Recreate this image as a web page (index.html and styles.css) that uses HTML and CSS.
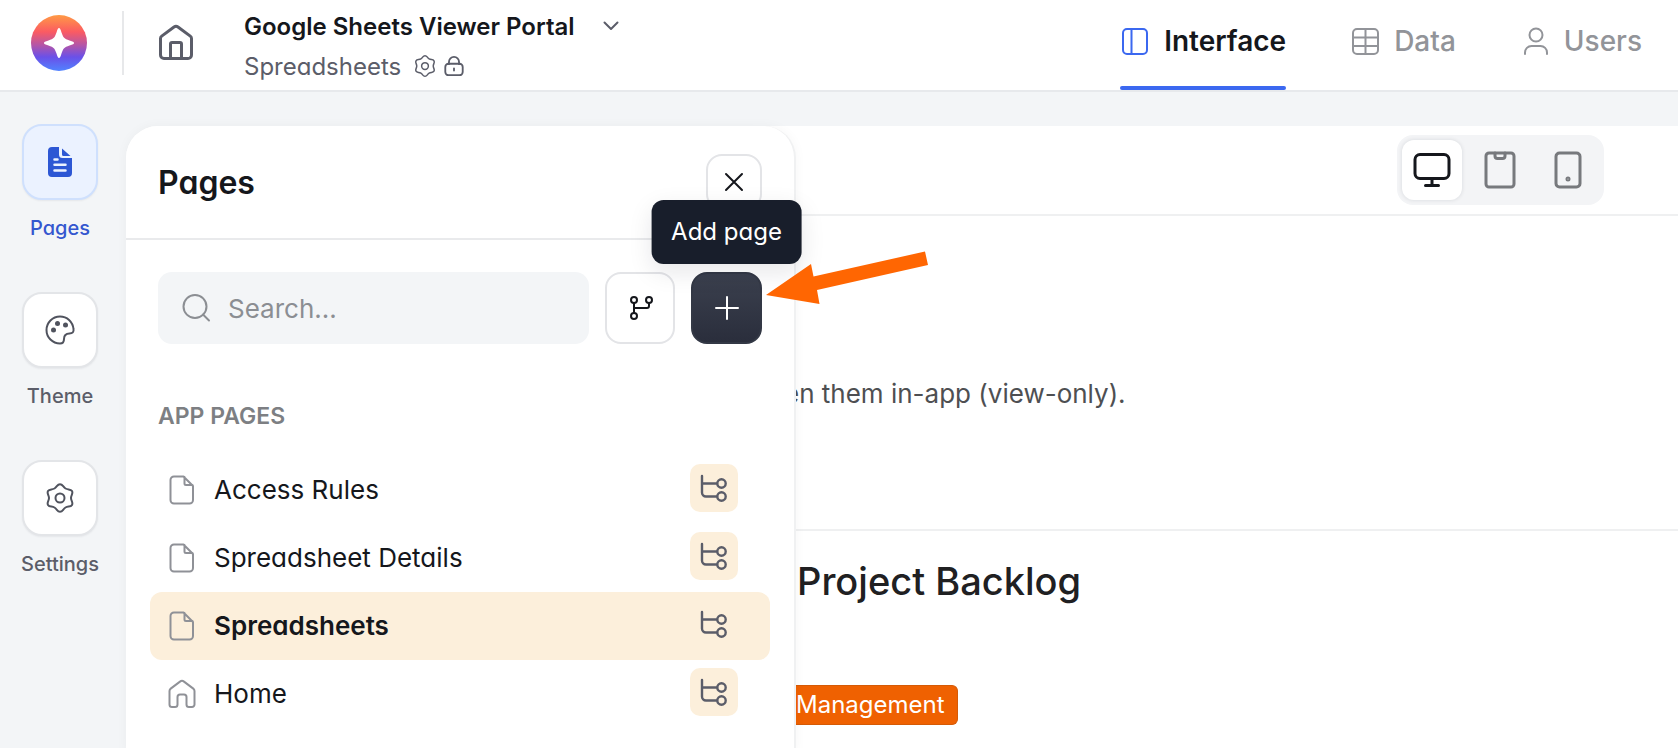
FILE: index.html
```html
<!DOCTYPE html>
<html lang="en">
<head>
    <meta charset="UTF-8">
    <meta name="viewport" content="width=device-width, initial-scale=1.0">
    <title>Google Sheets Viewer Portal</title>
    <link rel="stylesheet" href="styles.css">
</head>
<body>
    <!-- shared icons -->
    <svg class="sprite" width="0" height="0" aria-hidden="true">
        <symbol id="icon-file" viewBox="0 0 32 32">
            <path d="M8 2.500h9.500L27 12v14a3.500 3.500 0 0 1-3.500 3.500H8A3.500 3.500 0 0 1 4.500 26V6A3.500 3.500 0 0 1 8 2.500z M18.500 3v6.500a1.500 1.500 0 0 0 1.500 1.500h6.500" />
        </symbol>
        <symbol id="icon-gear" viewBox="0 0 32 32">
            <circle cx="16" cy="16" r="4.500" />
            <path d="M16 2.200C18.800 2.200 18.900 5 21.500 6.500C24.100 8 26.600 6.700 28 9.100C29.400 11.500 27 13 27 16C27 19 29.400 20.500 28 22.900C26.600 25.300 24.100 24 21.500 25.500C18.900 27 18.800 29.800 16 29.800C13.200 29.800 13.100 27 10.500 25.500C7.900 24 5.400 25.300 4 22.900C2.600 20.500 5 19 5 16C5 13 2.600 11.500 4 9.100C5.400 6.700 7.900 8 10.500 6.500C13.100 5 13.200 2.200 16 2.200z" />
        </symbol>
        <symbol id="icon-tree" viewBox="0 0 32 32">
            <g stroke-width="2.400">
                <path d="M4 4v16.500a4 4 0 0 0 4 4h11M4 11.500h15" />
                <circle cx="23.500" cy="11.500" r="4.200" />
                <circle cx="23.500" cy="24.500" r="4.200" />
            </g>
        </symbol>
    </svg>

    <header class="topbar">
        <a class="logo" href="#" aria-label="Logo">
            <svg viewBox="0 0 56 56">
                <defs>
                    <linearGradient id="logo-fill" x1="0" y1="0" x2="0" y2="1">
                        <stop offset="0" stop-color="#ff9a45" />
                        <stop offset=".3" stop-color="#fb5b62" />
                        <stop offset=".55" stop-color="#b055ab" />
                        <stop offset=".75" stop-color="#6a50e8" />
                        <stop offset="1" stop-color="#5183ff" />
                    </linearGradient>
                </defs>
                <circle cx="28" cy="28" r="28" fill="url(#logo-fill)" />
                <path d="M28 13c1 0 1.400 1 2.500 4.500 2 5.500 2.500 6 8 8C42 26.600 43 27 43 28s-1 1.400-4.500 2.500c-5.500 2-6 2.500-8 8C29.400 42 29 43 28 43s-1.400-1-2.500-4.500c-2-5.500-2.500-6-8-8C14 29.400 13 29 13 28s1-1.400 4.500-2.500c5.500-2 6-2.500 8-8C26.600 14 27 13 28 13z" fill="#fff" />
            </svg>
        </a>
        <a class="home-link" href="#" aria-label="Home">
            <svg class="icon" viewBox="0 0 36 36">
                <path d="M2.500 14.500a3 3 0 0 1 1.200-2.400L16 3a3.300 3.300 0 0 1 4 0l12.300 9.100a3 3 0 0 1 1.200 2.400V31a3.500 3.500 0 0 1-3.500 3.500H6A3.500 3.500 0 0 1 2.500 31z M12.500 34V20a1.500 1.500 0 0 1 1.500-1.500h8a1.500 1.500 0 0 1 1.500 1.500v14" />
            </svg>
        </a>
        <div class="app-info">
            <button class="app-name" type="button">
                Google Sheets Viewer Portal
                <svg class="icon chevron" viewBox="0 0 16 16"><path d="M1.500 4.500 8 11l6.500-6.500" /></svg>
            </button>
            <div class="page-info">
                <span class="page-name">Spreadsheets</span>
                <svg class="icon" viewBox="0 0 32 32"><use href="#icon-gear" /></svg>
                <svg class="icon" viewBox="0 0 24 24">
                    <path d="M6.500 10V7.500a5.500 5.500 0 0 1 11 0V10M12 14.500v2.500" />
                    <rect x="2.500" y="9.500" width="19" height="12.500" rx="3.500" />
                </svg>
            </div>
        </div>
        <nav class="tabs">
            <a class="tab active" href="#">
                <svg class="icon" viewBox="0 0 30 30">
                    <rect x="3" y="3" width="24" height="25" rx="4" />
                    <path d="M11.500 3v25" />
                </svg>
                Interface
            </a>
            <a class="tab" href="#">
                <svg class="icon" viewBox="0 0 30 30">
                    <rect x="3" y="3" width="25" height="25" rx="4" />
                    <path d="M15.500 3v25M3 11.500h25M3 20h25" />
                </svg>
                Data
            </a>
            <a class="tab" href="#">
                <svg class="icon" viewBox="0 0 30 30">
                    <circle cx="16" cy="9" r="6.500" />
                    <path d="M5 28v-1.500a6.500 6.500 0 0 1 6.500-6.500h9a6.500 6.500 0 0 1 6.500 6.500V28" />
                </svg>
                Users
            </a>
        </nav>
    </header>

    <div class="main">
        <nav class="sidebar">
            <button class="side-item active" type="button">
                <span class="side-icon">
                    <svg viewBox="0 0 32 32">
                        <path d="M8 1h7v7.500a3.500 3.500 0 0 0 3.500 3.500H28v15a4 4 0 0 1-4 4H8a4 4 0 0 1-4-4V5a4 4 0 0 1 4-4z M18 2.500 26.500 10H19.500a1.500 1.500 0 0 1-1.500-1.500z" fill="#2d57d4" />
                        <path d="M10.500 13.500h3M10.500 18.800h11M10.500 24.500h11" stroke="#ebf2ff" stroke-width="2.500" stroke-linecap="round" />
                    </svg>
                </span>
                Pages
            </button>
            <button class="side-item" type="button">
                <span class="side-icon">
                    <svg class="icon" viewBox="0 0 32 32">
                        <path d="M16 2.500C8.500 2.500 2.500 8.500 2.500 16S8.500 29.500 16 29.500c3 0 4-1.500 4-4.500 0-4 1.500-5.500 5.500-5.500 3 0 4.500-1.500 4-4.500C28.700 7.500 23 2.500 16 2.500z" />
                        <g fill="#50535e" stroke="none">
                            <circle cx="9.500" cy="16" r="2.500" />
                            <circle cx="13.500" cy="9.500" r="2.500" />
                            <circle cx="21.500" cy="11" r="2.500" />
                        </g>
                    </svg>
                </span>
                Theme
            </button>
            <button class="side-item" type="button">
                <span class="side-icon">
                    <svg class="icon" viewBox="0 0 32 32"><use href="#icon-gear" /></svg>
                </span>
                Settings
            </button>
        </nav>

        <div class="workspace">
            <section class="panel">
                <div class="panel-header">
                    <h1>Pages</h1>
                    <button class="box-button close" type="button" aria-label="Close">
                        <svg class="icon" viewBox="0 0 24 24"><path d="M4 4l16 16M20 4L4 20" /></svg>
                    </button>
                </div>
                <div class="tools">
                    <label class="search">
                        <svg class="icon" viewBox="0 0 30 30">
                            <circle cx="13" cy="13.500" r="11.500" />
                            <path d="M21 21.500l6 6" />
                        </svg>
                        <input type="text" placeholder="Search..." aria-label="Search">
                    </label>
                    <button class="box-button branch" type="button" aria-label="Branches">
                        <svg class="icon" viewBox="-2 0 26 26">
                            <circle cx="5" cy="5" r="3" />
                            <circle cx="20" cy="5" r="3" />
                            <circle cx="5" cy="21" r="3" />
                            <path d="M5 8v10M5 13h13a2 2 0 0 0 2-2V8" />
                        </svg>
                    </button>
                    <div class="add-wrap">
                        <button class="box-button add" type="button" aria-label="Add page">
                            <svg class="icon" viewBox="0 0 26 26"><path d="M13 2v22M2 13h22" /></svg>
                        </button>
                        <div class="tooltip" role="tooltip">Add page</div>
                        <svg class="arrow" viewBox="0 0 163 54">
                            <path d="M0 44 45 13l2.500 12.500L159 .500l3 13.500L51 39l2.500 14z" fill="#ff6602" />
                        </svg>
                    </div>
                </div>
                <h2>APP PAGES</h2>
                <ul class="page-list">
                    <li class="page-row">
                        <svg class="icon" viewBox="0 0 32 32"><use href="#icon-file" /></svg>
                        <a href="#">Access Rules</a>
                        <button class="tree" type="button" aria-label="Page tree"><svg class="icon" viewBox="0 0 32 32"><use href="#icon-tree" /></svg></button>
                    </li>
                    <li class="page-row">
                        <svg class="icon" viewBox="0 0 32 32"><use href="#icon-file" /></svg>
                        <a href="#">Spreadsheet Details</a>
                        <button class="tree" type="button" aria-label="Page tree"><svg class="icon" viewBox="0 0 32 32"><use href="#icon-tree" /></svg></button>
                    </li>
                    <li class="page-row selected">
                        <svg class="icon" viewBox="0 0 32 32"><use href="#icon-file" /></svg>
                        <a href="#">Spreadsheets</a>
                        <button class="tree" type="button" aria-label="Page tree"><svg class="icon" viewBox="0 0 32 32"><use href="#icon-tree" /></svg></button>
                    </li>
                    <li class="page-row">
                        <svg class="icon" viewBox="0 0 32 32">
                            <path d="M3.500 13a3 3 0 0 1 1.200-2.400l9.300-7a3.300 3.300 0 0 1 4 0l9.300 7a3 3 0 0 1 1.200 2.400v13.500a2.500 2.500 0 0 1-2.500 2.500h-3a2.500 2.500 0 0 1-2.500-2.500V19a2.500 2.500 0 0 0-2.500-2.500h-4a2.500 2.500 0 0 0-2.500 2.500v7.500a2.500 2.500 0 0 1-2.500 2.500H6a2.500 2.500 0 0 1-2.500-2.500z" />
                        </svg>
                        <a href="#">Home</a>
                        <button class="tree" type="button" aria-label="Page tree"><svg class="icon" viewBox="0 0 32 32"><use href="#icon-tree" /></svg></button>
                    </li>
                </ul>
            </section>

            <main class="canvas">
                <div class="canvas-bar">
                    <div class="devices">
                        <button class="device active" type="button" aria-label="Desktop">
                            <svg class="icon" viewBox="0 0 40 40">
                                <rect x="3" y="4.500" width="34" height="24" rx="5" />
                                <path d="M20 28.500v7M13.500 35.500h13" />
                            </svg>
                        </button>
                        <button class="device" type="button" aria-label="Tablet">
                            <svg class="icon" viewBox="0 0 40 40">
                                <rect x="6" y="3" width="28" height="34" rx="3" />
                                <path d="M15 3v3a2.500 2.500 0 0 0 2.500 2.500h5A2.500 2.500 0 0 0 25 6V3" />
                            </svg>
                        </button>
                        <button class="device" type="button" aria-label="Phone">
                            <svg class="icon" viewBox="0 0 40 40">
                                <rect x="8" y="3" width="24" height="34" rx="3.500" />
                                <circle cx="20" cy="29" r="1" />
                            </svg>
                        </button>
                    </div>
                </div>
                <div class="intro">
                    <p>en them in-app (view-only).</p>
                </div>
                <article class="sheet">
                    <h3>Project Backlog</h3>
                    <span class="tag">Management</span>
                </article>
            </main>
        </div>
    </div>
</body>
</html>
```
FILE: styles.css
```css
* {
    box-sizing: border-box;
}

body {
    margin: 0;
    min-height: 100vh;
    display: flex;
    flex-direction: column;
    background-color: #f3f5f7;
    color: #15171c;
    font-family: Inter, "Liberation Sans", sans-serif;
    font-size: 26px;
}

h1, h2, h3, p, ul {
    margin: 0;
    padding: 0;
}

a {
    color: inherit;
    text-decoration: none;
}

button {
    padding: 0;
    border: none;
    background: none;
    color: inherit;
    font: inherit;
    font-feature-settings: inherit;
    cursor: pointer;
}

.sprite {
    position: absolute;
}

.icon {
    fill: none;
    stroke: currentColor;
    stroke-width: 2;
    stroke-linecap: round;
    stroke-linejoin: round;
    flex: none;
}

/* top bar */
.topbar {
    display: flex;
    height: 92px;
    padding-right: 36px;
    background-color: #fff;
    border-bottom: 2px solid #e7e9ec;
}

.logo {
    width: 124px;
    height: 64px;
    margin-top: 11px;
    padding: 4px 31px;
    border-right: 2px solid #e7e8ea;
}

.logo svg {
    display: block;
    width: 56px;
    height: 56px;
}

.home-link {
    margin: 24px 0 0 34px;
    color: #5b5d69;
}

.home-link svg {
    display: block;
    width: 36px;
    height: 36px;
    stroke-width: 3;
}

.app-info {
    margin-left: 50px;
    padding-top: 6px;
    font-size: 24px;
}

.app-name {
    display: flex;
    align-items: center;
    gap: 28px;
    height: 40px;
    font-weight: 600;
}

.chevron {
    width: 16px;
    height: 16px;
    color: #5b5d69;
}

.page-info {
    display: flex;
    align-items: center;
    gap: 6px;
    height: 40px;
    color: #5b5d69;
    font-feature-settings: "cv11";
}

.page-info svg {
    width: 22px;
    height: 22px;
}

.page-info .icon:first-of-type {
    width: 24px;
    height: 24px;
}

.page-name {
    margin-right: 6px;
}

.tabs {
    display: flex;
    gap: 64px;
    margin-left: auto;
    font-size: 28px;
    font-weight: 500;
}

.tab {
    display: flex;
    align-items: center;
    gap: 14px;
    padding-bottom: 8px;
    color: #929499;
}

.tab svg {
    width: 30px;
    height: 30px;
}

.tab.active {
    position: relative;
    color: #15171c;
    font-weight: 600;
}

.tab.active::after {
    content: "";
    position: absolute;
    right: 0;
    bottom: 0;
    left: 0;
    height: 4px;
    border-radius: 2px;
    background-color: #3b68f0;
}

.tab.active svg {
    color: #3b68f0;
}

/* left rail */
.main {
    display: flex;
    flex: 1;
    font-feature-settings: "cv11";
}

.sidebar {
    display: flex;
    flex-direction: column;
    gap: 52px;
    width: 120px;
    padding-top: 32px;
}

.side-item {
    display: flex;
    flex-direction: column;
    align-items: center;
    gap: 16px;
    color: #5b5d69;
    font-size: 20px;
    font-weight: 500;
    line-height: 24px;
}

.side-icon {
    display: flex;
    align-items: center;
    justify-content: center;
    width: 76px;
    height: 76px;
    border: 2px solid #e3e5e8;
    border-radius: 20px;
    background-color: #fff;
    box-shadow: 0 1px 2px rgba(20, 24, 40, 0.06);
    color: #50535e;
}

.side-icon svg {
    width: 32px;
    height: 32px;
}

.side-item.active {
    color: #3457cf;
}

.side-item.active .side-icon {
    border-color: #cfe0fd;
    background-color: #ebf2ff;
}

/* pages panel */
.workspace {
    display: flex;
    flex: 1;
    min-width: 0;
    margin: 34px 0 0 6px;
    border-top-left-radius: 32px;
    background-color: #fff;
}

.panel {
    position: relative;
    z-index: 1;
    flex: none;
    width: 670px;
    border-right: 2px solid #f0f1f2;
    border-radius: 32px 32px 0 0;
    background-color: #fff;
    box-shadow: 0 0 12px rgba(20, 24, 40, 0.04);
}

.panel-header {
    display: flex;
    align-items: center;
    justify-content: space-between;
    height: 114px;
    padding: 0 32px;
    border-bottom: 2px solid #e9eaec;
}

.panel h1 {
    font-size: 32px;
    font-weight: 600;
}

.box-button {
    display: flex;
    align-items: center;
    justify-content: center;
    width: 72px;
    height: 72px;
    border: 2px solid #e3e4e7;
    border-radius: 16px;
    background-color: #fff;
}

.close {
    width: 56px;
    height: 56px;
}

.close svg {
    width: 24px;
    height: 24px;
}

.tools {
    display: flex;
    gap: 16px;
    padding: 32px;
}

.search {
    display: flex;
    flex: 1;
    align-items: center;
    gap: 16px;
    min-width: 0;
    padding: 0 24px;
    border-radius: 14px;
    background-color: #f3f5f7;
    color: #8b8e93;
}

.search svg {
    width: 30px;
    height: 30px;
}

.search input {
    flex: 1;
    min-width: 0;
    padding: 0;
    border: none;
    outline: none;
    background: none;
    color: #15171c;
    font: inherit;
    font-feature-settings: normal;
}

.search input::placeholder {
    color: #8b8e93;
    opacity: 1;
}

.branch {
    width: 70px;
}

.branch svg, .add svg {
    width: 26px;
    height: 26px;
}

.add-wrap {
    position: relative;
}

.add {
    width: 71px;
    border-color: #333845;
    background: linear-gradient(#3b404e, #2a2e3c);
    color: #fff;
}

.tooltip {
    position: absolute;
    bottom: 80px;
    left: 50%;
    transform: translateX(-50%);
    padding: 16px 20px;
    border-radius: 12px;
    background-color: #181e2b;
    box-shadow: 0 8px 24px rgba(20, 24, 40, 0.1);
    color: #fff;
    font-size: 24px;
    line-height: 32px;
    white-space: nowrap;
}

.arrow {
    position: absolute;
    top: -21px;
    left: 75px;
    width: 163px;
    height: 54px;
}

.panel h2 {
    padding: 24px 32px 0;
    color: #7d7f83;
    font-size: 23px;
    font-weight: 600;
    line-height: 32px;
}

.page-list {
    padding: 24px;
    list-style: none;
}

.page-row {
    display: flex;
    align-items: center;
    gap: 16px;
    height: 68px;
    padding: 0 32px 0 16px;
    border-radius: 12px;
}

.page-row > .icon {
    width: 32px;
    height: 32px;
    color: #8f9197;
}

.page-row a {
    flex: 1;
    padding-bottom: 2px;
}

.tree {
    display: flex;
    align-items: center;
    justify-content: center;
    width: 48px;
    height: 48px;
    margin-bottom: 4px;
    border-radius: 10px;
    background-color: #fcefdb;
    color: #5b5d69;
}

.tree svg {
    width: 32px;
    height: 32px;
}

.selected {
    background-color: #fcefdb;
    font-weight: 600;
}

/* app preview */
.canvas {
    flex: 1;
    min-width: 0;
    overflow: hidden;
    font-feature-settings: normal;
}

.canvas-bar {
    display: flex;
    align-items: center;
    justify-content: flex-end;
    height: 90px;
    padding-right: 74px;
    border-bottom: 2px solid #eff0f1;
}

.devices {
    display: flex;
    gap: 8px;
    padding: 5px 6px 5px 5px;
    border-radius: 16px;
    background-color: #f3f4f6;
}

.device {
    display: flex;
    align-items: center;
    justify-content: center;
    width: 60px;
    height: 60px;
    border-radius: 12px;
    color: #77797d;
}

.device svg {
    width: 40px;
    height: 40px;
    stroke-width: 3;
}

.device.active {
    background-color: #fff;
    box-shadow: 0 0 4px rgba(20, 24, 40, 0.12);
    color: #15171c;
}

.intro {
    display: flex;
    align-items: center;
    height: 315px;
    border-bottom: 2px solid #eff0f1;
}

.intro p {
    margin: 42px 0 0 -12px;
    color: #4e4f52;
}

.sheet {
    display: flex;
    flex-direction: column;
    align-items: flex-start;
    gap: 80px;
    padding-top: 26px;
}

.sheet h3 {
    padding-left: 1px;
    color: #202022;
    font-size: 38px;
    font-weight: 500;
    line-height: 48px;
}

.tag {
    padding: 0 12px 0 0;
    border: 1px solid #d55a06;
    border-left: none;
    border-radius: 0 6px 6px 0;
    background-color: #ef6101;
    color: #fff;
    font-size: 24px;
    line-height: 38px;
}
```
